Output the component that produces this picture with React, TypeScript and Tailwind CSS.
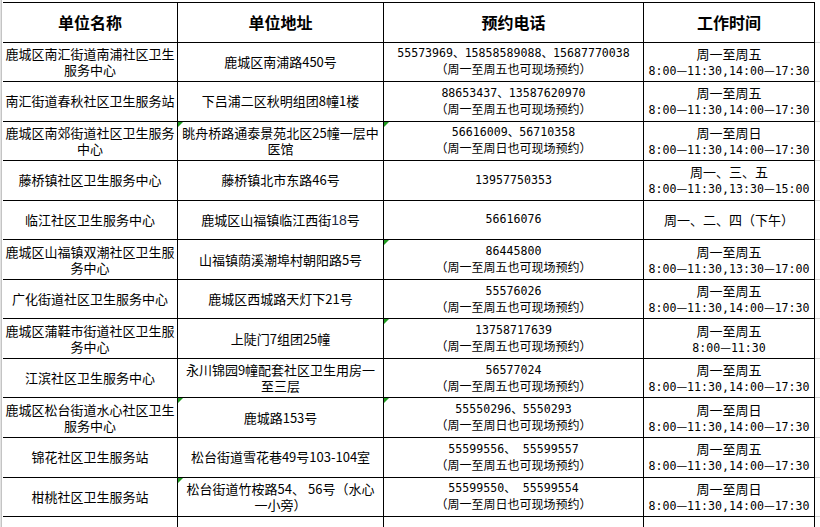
import React from "react";

type Row = {
  c1: string[];
  c2: React.ReactNode[];
  phone: string;
  note?: string;
  day: string;
  time?: string;
  tri2?: boolean;
  tri3?: boolean;
};

const rows: Row[] = [
  {
    c1: ["鹿城区南汇街道南浦社区卫生", "服务中心"],
    c2: ["鹿城区南浦路450号"],
    phone: "55573969、15858589088、15687770038",
    note: "（周一至周五也可现场预约）",
    day: "周一至周五",
    time: "8:00—11:30,14:00—17:30",
  },
  {
    c1: ["南汇街道春秋社区卫生服务站"],
    c2: ["下吕浦二区秋明组团8幢1楼"],
    phone: "88653437、13587620970",
    note: "（周一至周五也可现场预约）",
    day: "周一至周五",
    time: "8:00—11:30,14:00—17:30",
  },
  {
    c1: ["鹿城区南郊街道社区卫生服务", "中心"],
    c2: ["眺舟桥路通泰景苑北区25幢一层中", "医馆"],
    phone: "56616009、56710358",
    note: "（周一至周日也可现场预约）",
    day: "周一至周日",
    time: "8:00—11:30,14:00—17:30",
    tri2: true,
    tri3: true,
  },
  {
    c1: ["藤桥镇社区卫生服务中心"],
    c2: ["藤桥镇北市东路46号"],
    phone: "13957750353",
    day: "周一、三、五",
    time: "8:00—11:30,13:30—15:00",
  },
  {
    c1: ["临江社区卫生服务中心"],
    c2: [
      <>
        鹿城区山福镇临江西街
        <span className="font-['Liberation_Sans',sans-serif] text-[14px] text-[#1d2a44]">18</span>号
      </>,
    ],
    phone: "56616076",
    day: "周一、二、四（下午）",
  },
  {
    c1: ["鹿城区山福镇双潮社区卫生服", "务中心"],
    c2: ["山福镇荫溪潮埠村朝阳路5号"],
    phone: "86445800",
    note: "（周一至周五也可现场预约）",
    day: "周一至周五",
    time: "8:00—11:30,13:30—17:00",
    tri3: true,
  },
  {
    c1: ["广化街道社区卫生服务中心"],
    c2: ["鹿城区西城路天灯下21号"],
    phone: "55576026",
    note: "（周一至周五也可现场预约）",
    day: "周一至周五",
    time: "8:00—11:30,14:00—17:30",
  },
  {
    c1: ["鹿城区蒲鞋市街道社区卫生服", "务中心"],
    c2: ["上陡门7组团25幢"],
    phone: "13758717639",
    note: "（周一至周五也可现场预约）",
    day: "周一至周五",
    time: "8:00—11:30",
    tri3: true,
  },
  {
    c1: ["江滨社区卫生服务中心"],
    c2: ["永川锦园9幢配套社区卫生用房一", "至三层"],
    phone: "56577024",
    note: "（周一至周五也可现场预约）",
    day: "周一至周五",
    time: "8:00—11:30,14:00—17:30",
  },
  {
    c1: ["鹿城区松台街道水心社区卫生", "服务中心"],
    c2: ["鹿城路153号"],
    phone: "55550296、5550293",
    note: "（周一至周日也可现场预约）",
    day: "周一至周日",
    time: "8:00—11:30,14:00—17:30",
    tri2: true,
    tri3: true,
  },
  {
    c1: ["锦花社区卫生服务站"],
    c2: ["松台街道雪花巷49号103-104室"],
    phone: "55599556、 55599557",
    note: "（周一至周五也可现场预约）",
    day: "周一至周五",
    time: "8:00—11:30,14:00—17:30",
  },
  {
    c1: ["柑桃社区卫生服务站"],
    c2: ["松台街道竹桉路54、 56号（水心", "一小旁）"],
    phone: "55599550、 55599554",
    note: "（周一至周日也可现场预约）",
    day: "周一至周日",
    time: "8:00—11:30,14:00—17:30",
    tri2: true,
  },
];

function Tri() {
  return (
    <span className="absolute top-0 left-0 w-0 h-0 border-t-[5px] border-t-[#1f9a1f] border-r-[5px] border-r-transparent" />
  );
}

function Cell({
  children,
  tri,
  top,
}: {
  children?: React.ReactNode;
  tri?: boolean;
  top?: boolean;
}) {
  return (
    <div
      className={
        "relative flex flex-col items-center justify-center text-center border-r border-b border-black overflow-hidden " +
        (top ? "border-t" : "")
      }
    >
      {tri && <Tri />}
      {children}
    </div>
  );
}

const mono = "font-['DejaVu_Sans_Mono','Noto_Sans_CJK_SC',monospace] text-[11.6px] leading-[15px]";

function Time({ t }: { t: string }) {
  const parts = t.split("—");
  return (
    <div className={mono + " whitespace-nowrap"}>
      {parts.map((p, i) => (
        <React.Fragment key={i}>
          {i > 0 && (
            <span className="font-['Noto_Sans_CJK_SC',sans-serif] text-[12px]">—</span>
          )}
          {p}
        </React.Fragment>
      ))}
    </div>
  );
}

export default function App() {
  const grid = "grid grid-cols-[175px_206px_260px_171px_5px]";
  return (
    <div className="w-[820px] h-[527px] overflow-hidden bg-white flex font-['Noto_Sans_CJK_SC',sans-serif] text-black">
      <div className="flex h-full shrink-0">
        <div className="w-px h-full bg-[#e2e2e2]" />
        <div className="w-px h-full bg-[#c4c4c4]" />
        <div className="w-px h-full bg-white" />
      </div>
      <div className="flex flex-col pt-[2px] w-[817px] shrink-0">
        <div className={grid + " h-[41px]"}>
          {["单位名称", "单位地址", "预约电话", "工作时间"].map((h) => (
            <Cell key={h} top>
              <span className="text-[16px] font-bold leading-[20px]">{h}</span>
            </Cell>
          ))}
          <div className="border-b border-[#d4d4d4]" />
        </div>
        {rows.map((r, i) => (
          <div key={i} className={grid + " h-[40px]"}>
            <Cell>
              {r.c1.map((l, j) => (
                <div key={j} className="text-[13px] leading-[16px] whitespace-nowrap">
                  {l}
                </div>
              ))}
            </Cell>
            <Cell tri={r.tri2}>
              {r.c2.map((l, j) => (
                <div key={j} className="text-[13px] leading-[16px] whitespace-nowrap">
                  {l}
                </div>
              ))}
            </Cell>
            <Cell tri={r.tri3}>
              <div className={mono + " whitespace-pre"}>{r.phone}</div>
              {r.note && (
                <div className="text-[12px] leading-[16px] whitespace-nowrap">{r.note}</div>
              )}
            </Cell>
            <Cell>
              <div className="text-[13px] leading-[17px] whitespace-nowrap">{r.day}</div>
              {r.time && <Time t={r.time} />}
            </Cell>
            <div className="border-b border-[#d4d4d4]" />
          </div>
        ))}
        <div className={grid + " h-[10px]"}>
          <div className="border-r border-black" />
          <div className="border-r border-black" />
          <div className="border-r border-black" />
          <div className="border-r border-black" />
          <div />
        </div>
      </div>
    </div>
  );
}
